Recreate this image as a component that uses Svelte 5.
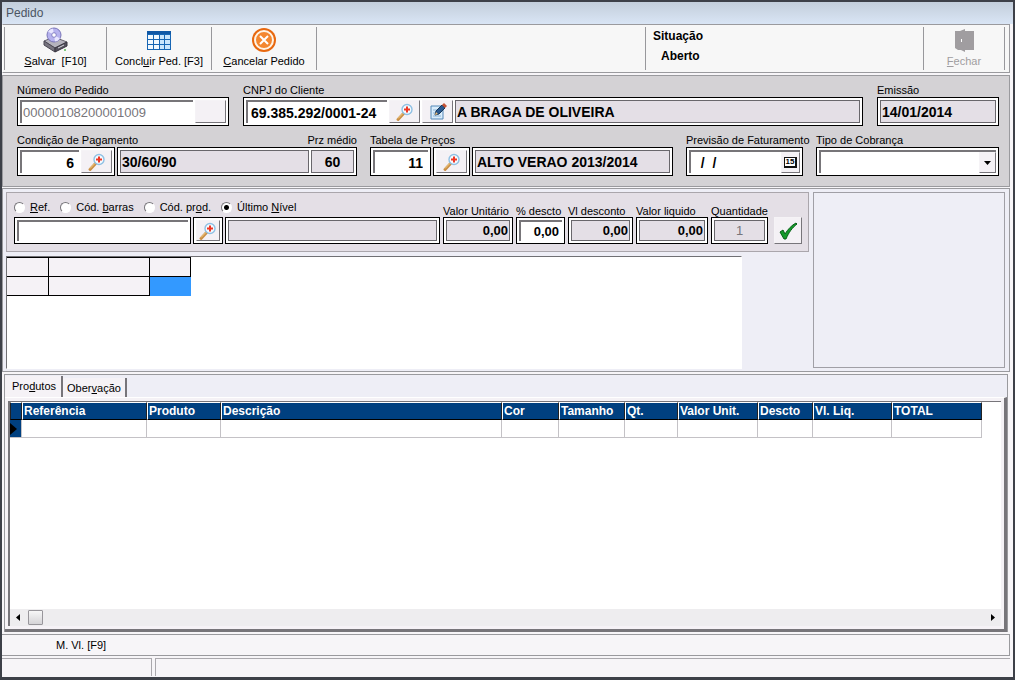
<script>
  let modoBusca = $state('nivel')
  let aba = $state('produtos')

  const MODOS = [
    { value: 'ref',    pre: '',         tecla: 'R', pos: 'ef.' },
    { value: 'barras', pre: 'Cód. ',    tecla: 'b', pos: 'arras' },
    { value: 'prod',   pre: 'Cód. pr',  tecla: 'o', pos: 'd.' },
    { value: 'nivel',  pre: 'Último ',  tecla: 'N', pos: 'ível' },
  ]

  const VALORES = [
    { id: 'unitario',   label: 'Valor Unitário', valor: '0,00', largura: 70, fixo: true },
    { id: 'pdescto',    label: '% descto',       valor: '0,00', largura: 49, fixo: false },
    { id: 'desconto',   label: 'Vl desconto',    valor: '0,00', largura: 65, fixo: true },
    { id: 'liquido',    label: 'Valor liquido',  valor: '0,00', largura: 72, fixo: true },
    { id: 'quantidade', label: 'Quantidade',     valor: '1',    largura: 57, fixo: true },
  ]

  const COLUNAS = [
    { nome: 'Referência',  largura: 125 },
    { nome: 'Produto',     largura: 74 },
    { nome: 'Descrição',   largura: 281 },
    { nome: 'Cor',         largura: 57 },
    { nome: 'Tamanho',     largura: 66 },
    { nome: 'Qt.',         largura: 53 },
    { nome: 'Valor Unit.', largura: 80 },
    { nome: 'Descto',      largura: 55 },
    { nome: 'Vl. Liq.',    largura: 79 },
    { nome: 'TOTAL',       largura: 90 },
  ]
</script>

{#snippet lupa()}
  <svg width="20" height="20" viewBox="0 0 20 20" aria-hidden="true">
    <path d="M3 17.5 9 11" stroke="#c98f45" stroke-width="3" stroke-linecap="round" />
    <path d="M3 16.5 8 11.3" stroke="#f5cf87" stroke-width="1" />
    <circle cx="12" cy="7.5" r="5" fill="#f5fbff" stroke="#8fc0e4" stroke-width="1.4" />
    <path d="M12 4.5v6M9 7.5h6" stroke="#ee3524" stroke-width="2" />
  </svg>
{/snippet}

<main class="janela">
  <header class="titulo">Pedido</header>

  <nav class="barra">
    <button type="button" class="acao">
      <svg width="26" height="26" viewBox="0 0 26 26" aria-hidden="true">
        <path d="m1 14 10-4 13 5-12 6z" fill="#b5b3bd" stroke="#66636f" />
        <path d="m1 14 11 7v4L1 18z" fill="#77747f" stroke="#4b4854" />
        <path d="m12 21 12-6v4l-12 6z" fill="#55525e" stroke="#37343f" />
        <path d="m15 21 6-3" stroke="#d8d8e0" />
        <circle cx="11" cy="8" r="7" fill="#b6b2ee" stroke="#7975b8" />
        <path d="M11 8 5 4.500A7 7 0 0 1 10 1.500zM11 8l6 3.500A7 7 0 0 1 12 14.500z" fill="#e8e6ff" />
        <circle cx="11" cy="8" r="2.300" fill="#fff" stroke="#8580c5" />
        <circle cx="22" cy="23" r="1" fill="#58b857" />
      </svg>
      <span><u>S</u>alvar&nbsp; [F10]</span>
    </button>
    <button type="button" class="acao">
      <svg width="26" height="26" viewBox="0 0 26 26" aria-hidden="true">
        <path d="M1 4h24v19H1z" fill="#1766b4" />
        <path d="M1 4h24v3H1z" fill="#0f58a6" />
        <path d="M2 8h5v4H2zM2 13h5v4H2zM2 18h5v4H2zM8 8h5v4H8zM8 13h5v4H8zM8 18h5v4H8z" fill="#f1f9ff" />
        <path d="M14 8h4v4h-4zM14 13h4v4h-4zM14 18h4v4h-4zM19 8h5v4h-5zM19 13h5v4h-5zM19 18h5v4h-5z" fill="#c9e5fc" />
      </svg>
      <span>Concl<u>u</u>ir Ped. [F3]</span>
    </button>
    <button type="button" class="acao">
      <svg width="26" height="26" viewBox="0 0 26 26" aria-hidden="true">
        <circle cx="13" cy="13" r="12" fill="#e8680f" />
        <circle cx="13" cy="13" r="9" fill="#f48730" stroke="#fff4e6" stroke-width="2" />
        <path d="m9 9 8 8M17 9l-8 8" stroke="#fff" stroke-width="2" />
      </svg>
      <span><u>C</u>ancelar Pedido</span>
    </button>
    <div class="situacao">
      <span>Situação</span>
      <span class="estado">Aberto</span>
    </div>
    <button type="button" class="acao fechar" disabled>
      <svg width="26" height="26" viewBox="0 0 26 26" aria-hidden="true">
        <path d="M4 4h5l5-2v2h9v19h-9v2l-4-2H7l-3-2z" fill="#a09da0" />
        <path d="M10.500 12v3" stroke="#fff" />
      </svg>
      <span><u>F</u>echar</span>
    </button>
  </nav>

  <section class="cabecalho">
    <div class="linha linha-1">
      <div class="campo numero">
        <label for="numero">Número do Pedido</label>
        <div class="caixa">
          <input id="numero" class="fundo apagado" value="00000108200001009" disabled />
          <button type="button" class="btn" aria-label="Buscar pedido"></button>
        </div>
      </div>
      <div class="campo cliente">
        <label for="cnpj">CNPJ do Cliente</label>
        <div class="caixa">
          <input id="cnpj" class="fundo cnpj" value="69.385.292/0001-24" />
          <button type="button" class="btn" aria-label="Buscar cliente">{@render lupa()}</button>
          <button type="button" class="btn" aria-label="Editar cliente">
            <svg width="20" height="20" viewBox="0 0 20 20" aria-hidden="true">
              <path d="M3 4h12v13H3z" fill="#d9ecfb" stroke="#5589b9" />
              <path d="M5 8h5M5 11h4M5 14h8" stroke="#8cb6da" />
              <path d="m7 13 1-4 6-6 3 3-6 6z" fill="#28588f" stroke="#173758" />
              <path d="m14 3 2-2 3 3-2 2z" fill="#c45335" />
              <path d="m7 13 1-3 2 2z" fill="#f0c07a" />
            </svg>
          </button>
          <input class="fixo cresce" aria-label="Nome do cliente" value="A BRAGA DE OLIVEIRA" readonly />
        </div>
      </div>
      <div class="campo emissao">
        <label for="emissao">Emissão</label>
        <div class="caixa">
          <input id="emissao" class="fixo cresce" value="14/01/2014" readonly />
        </div>
      </div>
    </div>

    <div class="linha linha-2">
      <div class="campo condicao">
        <div class="rotulos">
          <label for="condicao">Condição de Pagamento</label>
          <label for="prazo">Prz médio</label>
        </div>
        <div class="grupo">
          <div class="caixa cond-cod">
            <input id="condicao" class="fundo num" value="6" />
            <button type="button" class="btn" aria-label="Buscar condição">{@render lupa()}</button>
          </div>
          <div class="caixa cresce">
            <input class="fixo cresce" aria-label="Descrição da condição" value="30/60/90" readonly />
            <input id="prazo" class="fixo prazo" value="60" readonly />
          </div>
        </div>
      </div>
      <div class="campo tabela">
        <label for="tabela">Tabela de Preços</label>
        <div class="grupo">
          <div class="caixa tab-cod"><input id="tabela" class="fundo num" value="11" /></div>
          <div class="caixa"><button type="button" class="btn" aria-label="Buscar tabela">{@render lupa()}</button></div>
          <div class="caixa cresce">
            <input class="fixo cresce" aria-label="Nome da tabela" value="ALTO VERAO 2013/2014" readonly />
          </div>
        </div>
      </div>
      <div class="campo previsao">
        <label for="previsao">Previsão de Faturamento</label>
        <div class="caixa">
          <div class="fundo data">
            <input id="previsao" value="  /  /" />
            <button type="button" class="btn" aria-label="Abrir calendário"><span class="dia">15</span></button>
          </div>
        </div>
      </div>
      <div class="campo cobranca">
        <label for="cobranca">Tipo de Cobrança</label>
        <div class="caixa">
          <div class="fundo combo">
            <select id="cobranca"><option></option></select>
            <span class="btn seta"><svg width="7" height="4" viewBox="0 0 7 4" aria-hidden="true"><path d="M0 0h7L3.500 4z" /></svg></span>
          </div>
        </div>
      </div>
    </div>
  </section>

  <section class="itens">
    <div class="esquerda">
      <div class="entrada">
        <div class="busca">
          <div class="modos">
            {#each MODOS as modo (modo.value)}
              <label>
                <input type="radio" name="modo" value={modo.value} bind:group={modoBusca} />
                <span>{modo.pre}<u>{modo.tecla}</u>{modo.pos}</span>
              </label>
            {/each}
          </div>
          <div class="grupo">
            <div class="caixa codigo"><input class="fundo cresce" aria-label="Código" /></div>
            <div class="caixa"><button type="button" class="btn" aria-label="Buscar produto">{@render lupa()}</button></div>
            <div class="caixa cresce"><input class="fixo cresce" aria-label="Produto" readonly /></div>
          </div>
        </div>
        {#each VALORES as v (v.id)}
          <div class="campo valor" style:width="{v.largura}px">
            <label for={v.id}>{v.label}</label>
            <div class="caixa">
              <input id={v.id} class={['cresce', v.fixo ? 'fixo' : 'fundo', v.id]} value={v.valor} readonly={v.fixo} />
            </div>
          </div>
        {/each}
        <button type="button" class="btn confirmar" aria-label="Confirmar item">
          <svg width="20" height="18" viewBox="0 0 20 18" aria-hidden="true">
            <path d="m2 10 3-2 2 4C10 7 14 3 18 1l1 1C14 6 11 10 8 17H6z" fill="#149a2b" stroke="#076117" />
          </svg>
        </button>
      </div>
      <div class="grade">
        <table aria-label="Tamanhos">
          <colgroup><col class="c1" /><col class="c2" /><col class="c1" /></colgroup>
          <tbody>
            <tr><td></td><td></td><td></td></tr>
            <tr><td></td><td></td><td class="sel"></td></tr>
          </tbody>
        </table>
      </div>
    </div>
    <aside class="foto"></aside>
  </section>

  <section class="detalhe">
    <div class="abas" role="tablist">
      <button type="button" role="tab" class="aba" class:ativa={aba === 'produtos'} aria-selected={aba === 'produtos'} onclick={() => aba = 'produtos'}>Pro<u>d</u>utos</button>
      <button type="button" role="tab" class="aba" class:ativa={aba === 'obs'} aria-selected={aba === 'obs'} onclick={() => aba = 'obs'}>Ober<u>v</u>ação</button>
    </div>
    <div class="pagina">
      <div class="lista">
        {#if aba === 'produtos'}
          <table class="produtos">
            <thead>
              <tr>
                <th class="marca"></th>
                {#each COLUNAS as col (col.nome)}
                  <th style:width="{col.largura}px">{col.nome}</th>
                {/each}
              </tr>
            </thead>
            <tbody>
              <tr>
                <td class="marca"><svg width="7" height="12" viewBox="0 0 7 12" aria-hidden="true"><path d="M0 0l7 6-7 6z" /></svg></td>
                {#each COLUNAS as col (col.nome)}<td></td>{/each}
              </tr>
            </tbody>
          </table>
        {/if}
        <div class="rolagem">
          <svg width="4" height="7" viewBox="0 0 4 7" aria-hidden="true"><path d="M4 0v7L0 3.500z" /></svg>
          <span class="polegar"></span>
          <svg class="fim" width="4" height="7" viewBox="0 0 4 7" aria-hidden="true"><path d="M0 0v7l4-3.500z" /></svg>
        </div>
      </div>
    </div>
  </section>

  <div class="atalhos">M. Vl. [F9]</div>
  <footer class="status"><span></span><span></span></footer>
</main>

<style>
  :global(body) { margin: 0; }
  * { box-sizing: border-box; }

  .janela {
    display: flex;
    flex-direction: column;
    min-height: 100vh;
    padding-right: 3px;
    border: 2px solid #3d4048;
    border-bottom-width: 3px;
    background: #f7f5f8;
    font-family: 'Liberation Sans', Arial, sans-serif;
    font-size: 11px;
    line-height: 12px;
    color: #000;
  }

  input, button, select {
    min-width: 0;
    margin: 0;
    padding: 0;
    border: 0;
    border-radius: 0;
    background: none;
    font: inherit;
    color: inherit;
  }
  input:focus, select:focus { outline: none; }

  .titulo {
    height: 22px;
    margin-right: -3px;
    padding-left: 4px;
    background: linear-gradient(#c3cedb, #d9e5f5);
    font-size: 12px;
    line-height: 22px;
    color: #4b5563;
  }

  /* Barra de ações */
  .barra {
    display: flex;
    height: 49px;
    padding: 2px 4px 2px 1px;
    border: 1px solid #9a9a9e;
    border-left-color: #fff;
    background: #f7f7f7;
  }
  .acao {
    display: flex;
    flex-direction: column;
    align-items: center;
    width: 105px;
    height: 43px;
    border-right: 1px solid #98989c;
  }
  .acao:first-child { width: 103px; border-left: 1px solid #98989c; }
  .acao span { margin-top: 2px; white-space: nowrap; }
  .fechar { width: 81px; color: #a09da0; }
  .situacao {
    display: flex;
    flex-direction: column;
    gap: 8px;
    width: 279px;
    margin-left: auto;
    padding: 3px 7px;
    border: solid #98989c;
    border-width: 0 1px;
    font-size: 12px;
    font-weight: 700;
  }
  .estado { padding-left: 8px; }

  /* Cabeçalho do pedido */
  .cabecalho {
    display: flex;
    flex-direction: column;
    gap: 8px;
    margin-top: 2px;
    padding: 8px 10px 10px 14px;
    border: 1px solid #9a9a9e;
    background: #d4d2d5;
  }
  .linha { display: flex; }
  .linha-1 { gap: 14px; }
  .linha-2 { gap: 13px; }
  .campo { display: flex; flex-direction: column; min-width: 0; }
  .campo label { height: 13px; white-space: nowrap; }
  .rotulos { display: flex; justify-content: space-between; }
  .grupo { display: flex; gap: 2px; }
  .cresce { flex: 1; min-width: 0; }

  .caixa {
    display: flex;
    gap: 2px;
    height: 29px;
    padding: 2px;
    border: 1px solid #000;
    background: #fff;
  }
  .caixa input { font-size: 14px; font-weight: 700; }
  .fundo {
    padding: 0 3px;
    border: solid #777579;
    border-width: 2px 0 0 2px;
    background: #fff;
  }
  .fixo {
    padding: 0 1px;
    border: 1px solid #69676c;
    background: #e4dfe6;
  }
  .btn {
    display: grid;
    place-items: center;
    flex: none;
    width: 31px;
    border: 1px solid;
    border-color: #f5f3f6 #77757a #77757a #f5f3f6;
    background: #f4f1f5;
  }

  .numero { width: 212px; }
  .numero input { flex: 1; }
  .caixa .apagado { padding: 0 1px; font-size: 13px; font-weight: 400; color: #77757a; }
  .cliente { flex: 1; }
  .cnpj { width: 141px; }
  .emissao { width: 122px; }

  .condicao { flex: 340; }
  .tabela { flex: 303; }
  .previsao { width: 117px; }
  .cobranca { flex: 183; }
  .cond-cod { width: 98px; }
  .cond-cod input { flex: 1; }
  .tab-cod { width: 61px; }
  .tab-cod input { flex: 1; }
  .num { padding-right: 5px; text-align: right; }
  .prazo { width: 43px; text-align: center; }

  .data, .combo { display: flex; flex: 1; min-width: 0; padding: 0; }
  .data input { flex: 1; padding-left: 2px; }
  .data .btn { width: 19px; }
  .dia {
    padding: 0 1px;
    border: 1px solid #111;
    border-width: 1px 2px 2px 1px;
    background: #fff;
    font-size: 8px;
    font-weight: 700;
    line-height: 8px;
  }
  .combo { display: grid; }
  .combo select { grid-area: 1 / 1; appearance: none; }
  .seta { grid-area: 1 / 1; justify-self: end; width: 17px; pointer-events: none; }

  /* Lançamento de itens */
  .itens {
    display: flex;
    gap: 4px;
    margin-top: 1px;
    padding: 3px 4px 2px 3px;
    border: 1px solid #9a9a9e;
    background: #eeeef6;
  }
  .esquerda { display: flex; flex-direction: column; gap: 4px; flex: 1; min-width: 0; }
  .entrada {
    display: flex;
    align-items: flex-end;
    gap: 3px;
    height: 60px;
    padding: 6px 6px 7px 7px;
    border: 1px solid #aaa6ac;
    background: #e4dfe6;
  }
  .entrada .caixa { height: 27px; }
  .entrada .campo label { height: 12px; }
  .busca { flex: 1; min-width: 0; }
  .modos { display: flex; gap: 10px; padding-bottom: 3px; }
  .modos label { display: flex; align-items: center; gap: 5px; height: 14px; white-space: nowrap; }
  .modos input {
    appearance: none;
    width: 11px;
    height: 11px;
    border: 1px solid;
    border-color: #77757a #fff #fff #77757a;
    border-radius: 50%;
    background: #fff;
  }
  .modos input:checked { background: radial-gradient(circle, #000 2px, #fff 3px); }
  .codigo { width: 177px; }
  .busca .btn { width: 24px; }
  .valor input { width: 100%; font-size: 13px; text-align: right; }
  .valor .quantidade { font-weight: 400; text-align: center; color: #77757a; }
  .confirmar {
    width: 28px;
    height: 27px;
    margin-left: 3px;
  }

  .grade {
    width: 736px;
    max-width: 100%;
    height: 113px;
    border: 1px solid;
    border-color: #707074 #fff #fff #707074;
    background: #fff;
  }
  .grade table { width: 183px; border-collapse: collapse; table-layout: fixed; }
  .grade td { height: 19px; padding: 0; border: 1px solid #000; background: #f5f2f6; }
  .grade td:first-child { border-left: 0; }
  .grade .sel { background: #39f; border-color: #39f; border-top-color: #000; border-left-color: #000; }
  .c1 { width: 41px; }
  .c2 { width: 101px; }
  .foto { width: 192px; margin-bottom: 1px; border: 1px solid #a09fa6; }

  /* Abas e lista de produtos */
  .detalhe {
    display: flex;
    flex-direction: column;
    flex: 1;
    margin: 2px 2px 0 2px;
    border: solid #9a9a9e;
    border-width: 1px 1px 0 1px;
    background: #eeeef6;
  }
  .abas { display: flex; align-items: flex-end; height: 22px; }
  .aba {
    height: 19px;
    padding: 0 4px;
    border-right: 2px solid #77757a;
    background: #f5f2f6;
  }
  .aba.ativa { height: 21px; padding: 0 5px 2px 7px; }
  .pagina {
    display: flex;
    flex: 1;
    padding: 3px;
    border: solid #77757a;
    border-width: 0 3px 3px 0;
    border-top: 1px solid #fff;
    background: #f5f2f6;
  }
  .lista {
    display: flex;
    flex-direction: column;
    flex: 1;
    min-width: 0;
    border: solid #77757a;
    border-width: 1px 0 0 2px;
    background: #fff;
  }
  .produtos { width: 972px; border-collapse: separate; border-spacing: 0; table-layout: fixed; }
  .produtos th {
    height: 18px;
    padding: 0 1px;
    border: 1px solid;
    border-color: #fff #222 #000 #fff;
    background: #004080;
    color: #fff;
    font-size: 12px;
    text-align: left;
  }
  .produtos td { height: 18px; padding: 0; border: solid #c4c2c6; border-width: 0 1px 1px 0; }
  .produtos .marca { width: 12px; border-left-color: #222; }
  .produtos td.marca { background: #004080; line-height: 0; }
  .rolagem {
    display: flex;
    align-items: center;
    gap: 8px;
    height: 17px;
    margin-top: auto;
    padding: 0 6px;
    background: #eeedef;
  }
  .polegar {
    width: 15px;
    height: 15px;
    border: 1px solid #98969b;
    border-radius: 1px;
    background: linear-gradient(#f7f7f7, #d5d4d7);
  }
  .fim { margin-left: auto; }

  .atalhos {
    height: 22px;
    margin-top: 2px;
    padding-left: 54px;
    border: 1px solid #9a9a9e;
    border-left: 0;
    line-height: 20px;
  }
  .status { display: flex; gap: 3px; height: 18px; margin: 2px 0 1px; }
  .status span { flex: 1; border: solid #aaa8ad; border-width: 1px 0 0 1px; }
  .status span:first-child { flex: none; width: 150px; border-width: 1px 1px 0 0; }
</style>
